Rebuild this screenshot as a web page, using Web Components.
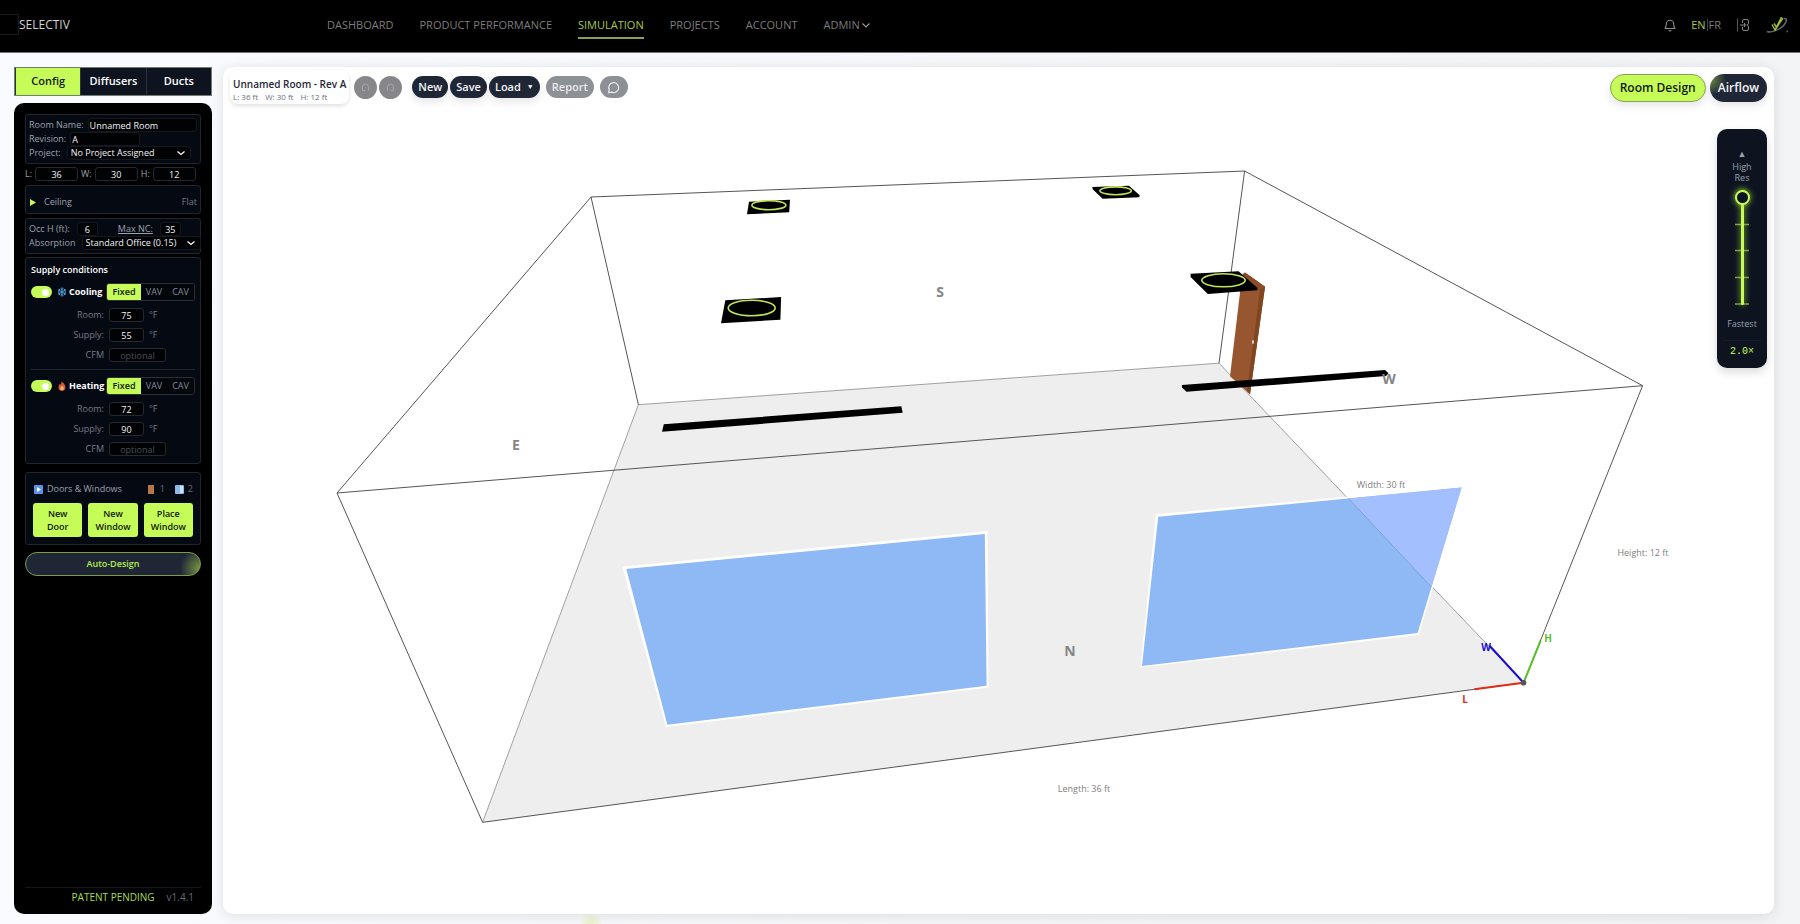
<!DOCTYPE html>
<html lang="en">
<head>
<meta charset="utf-8">
<title>Selectiv – Simulation</title>
<style>
html,body{margin:0;height:100%}
body{font-family:"Open Sans","Noto Sans",sans-serif;--lime:#c6fc57;--ink:#0d1420;--slate:#1f2737;--muted:#9ca2ac;--line:#20252e}
</style>
</head>
<body>
<selectiv-app></selectiv-app>
<script>
const BASE = `*,*::before,*::after{box-sizing:border-box}button,input,select{font:inherit;color:inherit;margin:0}button{cursor:pointer}svg{display:block}a{color:inherit;text-decoration:none}`;
const define = (name, css, html) => customElements.define(name, class extends HTMLElement {
  constructor() {
    super();
    this.attachShadow({mode: "open"});
  }
  connectedCallback() {
    const t = document.createElement("template");
    t.innerHTML = `<style>${BASE}${css}</style>${typeof html === "function" ? html(this) : html}`;
    this.shadowRoot.replaceChildren(t.content.cloneNode(true));
  }
});
const attr = (el, n, d = "") => el.getAttribute(n) ?? d;

define("nav-link", `
:host{display:block}
a{display:flex;align-items:center;gap:2px;height:26px;font-size:11px;line-height:16px;color:#7d7d7d;border-bottom:2px solid transparent;white-space:nowrap}
:host([current]) a{color:#a9c64c;border-color:#8aa05a}
svg{width:8px;height:8px}`,
el => `<a href="#"${el.hasAttribute("current") ? ' aria-current="page"' : ""}><slot></slot>${el.hasAttribute("menu") ? '<svg viewBox="0 0 8 8"><path d="M.5 2.5 4 6l3.500-3.500" fill="none" stroke="#999" stroke-width="1.200"/></svg>' : ""}</a>`);

define("app-header", `
:host{display:flex;align-items:center;height:53px;background:#000;border-bottom:1px solid #77707a;color:#7d7d7d;padding:0 12px 3px 0}
.brand{display:flex;align-items:center;width:327px;color:#d0d0d0;font-size:12px;line-height:16px}
.mark{width:19px;height:21px;border:1px solid #1b1b1b;border-left:0}
nav{display:flex;gap:26px;padding-top:2px}
.right{margin-left:auto;display:flex;align-items:center;font-size:11px;line-height:16px}
.lang{display:flex;gap:1px;margin:0 16px 0 15px}
.lang .on{color:#a9c64c}
.lang i{width:1px;height:12px;background:#444;align-self:center}
button{border:0;background:none;padding:0}
.logo{margin-left:16px}`,
`<a class="brand" href="#"><span class="mark"></span>SELECTIV</a>
<nav><nav-link>DASHBOARD</nav-link><nav-link>PRODUCT PERFORMANCE</nav-link><nav-link current>SIMULATION</nav-link><nav-link>PROJECTS</nav-link><nav-link>ACCOUNT</nav-link><nav-link menu>ADMIN</nav-link></nav>
<div class="right">
<button aria-label="Notifications"><svg width="12" height="14" viewBox="0 0 12 14" fill="none" stroke="#8b8b8b" stroke-width="1.100"><path d="M1 10.500C2.300 9 2.300 8 2.300 6a3.700 3.700 0 0 1 7.400 0c0 2 0 3 1.300 4.500z" stroke-linejoin="round"/><path d="M4.700 12.200a1.500 1.500 0 0 0 2.600 0"/></svg></button>
<span class="lang"><a class="on" href="#">EN</a><i></i><a href="#">FR</a></span>
<button aria-label="Sign out"><svg width="13" height="14" viewBox="0 0 13 14" fill="none" stroke="#858585"><path d="M.5.500v13" stroke="#555"/><path d="M5.500 5V3q0-1.500 1.500-1.500h3Q11.500 1.500 11.500 3v2q0 1.500-1.500 2 1.500.500 1.500 2v2q0 1.500-1.500 1.500H7q-1.500 0-1.500-1.500V9M3 7h6.500M7.500 5v4"/></svg></button>
<a class="logo" href="#" aria-label="Company"><svg width="22" height="18" viewBox="0 0 22 18" fill="none"><path d="M1 15.500c4 2 18-3 19.500-11.500q0-1.500-2.500-1.500" stroke="#666" stroke-width="1.500"/><path d="m6 8.500 3 5.500 6.500-13M8 7.500l2 3M9 14 17 2" stroke="#9fbd3f" stroke-width="1.400"/><path d="M20.500 15.500h1.500" stroke="#666" stroke-width="1.500"/></svg></a>
</div>`);

define("side-tabs", `
:host{display:grid;grid-template-columns:repeat(3,1fr);height:29px;border:1px solid #747c70;background:var(--ink)}
button{border:0;border-left:1px solid #2a3240;background:none;color:#fff;font-size:11px;line-height:16px;font-weight:600;padding:0 0 1px}
button:first-child{border:0}
button[aria-selected=true]{background:var(--lime);color:#10180a}`,
`<button role="tab" aria-selected="true">Config</button><button role="tab" aria-selected="false">Diffusers</button><button role="tab" aria-selected="false">Ducts</button>`);

define("panel-card", `
:host{display:flex;flex-direction:column;background:#050912;border:1px solid var(--line);border-radius:3px;padding:3px}`, `<slot></slot>`);

/* label + input in one row; width and alignment come from attributes */
define("text-field", `
:host{display:flex;align-items:center;gap:var(--gap,4px);height:14px;font-size:9px;line-height:12px;color:var(--muted);white-space:nowrap}
input{width:var(--w,100%);min-width:0;height:100%;border:1px solid #15191f;border-radius:3px;background:#010204;color:#f2f3f5;padding:0 1px;outline:0}
:host([center]) input{text-align:center;padding:0}
:host([tall]) input{border-color:#24282f}
:host([under]) label{text-decoration:underline}
:host([form]) label{width:73px;text-align:right;color:#767c86}
:host([form]){gap:5px}
:host([form]:not([center])) input{padding:0 10px}
input::placeholder{color:#4b5059;opacity:1}
span{color:#767c86}`,
el => `<label for="f">${attr(el, "label")}</label><input id="f" value="${attr(el, "value")}" placeholder="${attr(el, "placeholder")}">${el.hasAttribute("unit") ? `<span>${attr(el, "unit")}</span>` : ""}`);

define("select-field", `
:host{display:flex;align-items:center;gap:6px;height:14px;font-size:9px;line-height:12px;color:var(--muted);white-space:nowrap}
.box{display:grid;grid-template-columns:1fr 14px;align-items:center;width:var(--w);flex:none}
select{grid-area:1/1/2/3;appearance:none;height:14px;border:1px solid #15191f;border-radius:3px;background:#010204;color:#f2f3f5;padding:0 3px;width:100%;outline:0}
svg{grid-area:1/2;width:8px;height:8px;pointer-events:none}`,
el => `<label for="s">${attr(el, "label")}</label><span class="box"><select id="s"><option>${attr(el, "value")}</option></select><svg viewBox="0 0 8 8"><path d="m.500 2.500 3.500 3 3.500-3" fill="none" stroke="#fff" stroke-width="1.300"/></svg></span>`);

const SNOW = `<svg width="10" height="10" viewBox="0 0 10 10" fill="none" stroke="#4da3dd" stroke-width="1"><path d="M5 .500v9M1 2.700l8 4.600M1 7.300l8-4.600M3.500 1.300 5 2.700l1.500-1.400M3.500 8.700 5 7.300l1.500 1.400M1 4.300l1.800-.500L2.400 2M9 5.700l-1.800.500L7.600 8M1 5.700l1.800.500L2.400 8M9 4.300l-1.800-.500L7.600 2"/></svg>`;
const FIRE = `<svg width="10" height="10" viewBox="0 0 10 10"><path d="M4.500.300C6 2 8.500 3.500 8.500 6.500A3.500 3.500 0 0 1 5 9.800 3.500 3.500 0 0 1 1.500 6.500C1.500 4.500 2.500 4 2.700 2.800l.8.900Q4.800 2.500 4.500.300z" fill="#d9583a"/><path d="M5 4.500c1 1 1.800 1.600 1.800 3A1.800 2 0 0 1 5 9.500a1.800 2 0 0 1-1.800-2C3.200 6.300 4.500 6 5 4.500z" fill="#f6b36a"/></svg>`;

define("supply-mode", `
:host{display:flex;flex-direction:column;gap:6px}
.head{display:flex;align-items:center;height:18px;margin-bottom:1px;font-size:9px;line-height:12px}
.toggle{appearance:none;width:21px;height:12px;border-radius:6px;background:var(--lime);margin:0 5px 0 0;display:flex;align-items:center;justify-content:flex-end;padding:0 3px;flex:none}
.toggle::before{content:"";width:7px;height:7px;border-radius:50%;background:#fff}
label{color:#fff;font-weight:700;margin-left:2px;flex:1}
.seg{display:grid;grid-template-columns:34px 26px 27px;width:89px;height:18px;border:1px solid #2a2f38;border-radius:3px;overflow:hidden;flex:none}
.seg button{border:0;background:#03060b;color:#858b95;padding:0}
.seg .on{background:var(--lime);color:#10180a;font-weight:600}`,
el => `<div class="head"><input class="toggle" id="t" type="checkbox" role="switch" checked>${attr(el, "icon") === "snow" ? SNOW : FIRE}<label for="t">${attr(el, "label")}</label>
<div class="seg"><button class="on">Fixed</button><button>VAV</button><button>CAV</button></div></div>
<text-field form tall center label="Room:" value="${attr(el, "room")}" unit="°F" style="--w:35px"></text-field>
<text-field form tall center label="Supply:" value="${attr(el, "supply")}" unit="°F" style="--w:35px"></text-field>
<text-field form tall center label="CFM" placeholder="optional" style="--w:57px"></text-field>`);

define("config-panel", `
:host{display:flex;flex-direction:column;background:#000;border-radius:10px;padding:11px 11px 8px;font-size:9px;line-height:12px;color:var(--muted)}
.dims{display:flex;gap:3px;margin:3px 0 4px}
.occ{display:flex;gap:20px}
.ceiling{display:flex;align-items:center;gap:8px;height:21px;padding:5px 0 0 1px;border:0;background:none;text-align:left}
.ceiling b{flex:1;font-weight:400}
.ceiling span{color:#767c86}
.c2{margin:4px 0 3px}
.supply{padding:5px 5px 7px}
h2{margin:0 0 6px;font-size:9px;line-height:14px;color:#fff;font-weight:600}
hr{width:100%;margin:7px 0;border:0;border-top:1px solid var(--line)}
.dw{margin:8px 0 7px;padding:6px 7px 7px}
.dwh{display:flex;align-items:center;gap:4px;height:20px;padding-left:1px}
.dwh b{flex:1;font-weight:400}
.dwh span{color:#686e79;margin:0 6px 0 2px}
.dwh span:last-child{margin:0}
.btns{display:grid;grid-template-columns:repeat(3,1fr);gap:6px;margin-top:4px}
.btns button{height:34px;border:0;border-radius:3px;background:var(--lime);color:#10180a;font-weight:600;line-height:13px;padding:0 4px}
.auto{height:24px;border:1px solid #7d9a49;border-radius:12px;background:radial-gradient(circle at 100% 70%,#7a9546 0,#1f2737 20px);color:#b4ec4c;font-weight:600;padding:0}
footer{display:flex;justify-content:flex-end;gap:12px;margin-top:auto;border-top:1px solid #12161d;padding:0 7px 0 0;font-size:10px;line-height:18px;color:#686e79}
footer b{font-weight:400;color:#a9dc48}`,
`<panel-card>
<text-field label="Room Name:" value="Unnamed Room"></text-field>
<text-field label="Revision:" value="A" style="--w:70px"></text-field>
<select-field label="Project:" value="No Project Assigned" style="--w:124px"></select-field>
</panel-card>
<div class="dims">
<text-field tall center label="L:" value="36" style="--w:43px;--gap:3px"></text-field>
<text-field tall center label="W:" value="30" style="--w:43px;--gap:3px"></text-field>
<text-field tall center label="H:" value="12" style="--w:43px;--gap:3px"></text-field>
</div>
<panel-card><button class="ceiling" aria-expanded="false"><svg width="6" height="7" viewBox="0 0 6 7"><path d="M0 0v7l6-3.500z" fill="#c6fc57"/></svg><b>Ceiling</b><span>Flat</span></button></panel-card>
<panel-card class="c2">
<div class="occ"><text-field center label="Occ H (ft):" value="6" style="--w:21px;--gap:7px"></text-field><text-field center under label="Max NC:" value="35" style="--w:21px;--gap:7px"></text-field></div>
<select-field label="Absorption" value="Standard Office (0.15)" style="--w:119px"></select-field>
</panel-card>
<panel-card class="supply"><h2>Supply conditions</h2>
<supply-mode icon="snow" label="Cooling" room="75" supply="55"></supply-mode><hr>
<supply-mode icon="fire" label="Heating" room="72" supply="90"></supply-mode></panel-card>
<panel-card class="dw"><div class="dwh"><svg width="9" height="9" viewBox="0 0 9 9"><rect width="9" height="9" rx="1" fill="#5b93e6"/><path d="M3 2v5l4-2.500z" fill="#fff"/></svg><b>Doors &amp; Windows</b>
<svg width="6" height="9" viewBox="0 0 6 9"><rect width="6" height="9" fill="#b87548"/></svg><span>1</span>
<svg width="9" height="9" viewBox="0 0 9 9"><rect width="9" height="9" rx="1" fill="#8fbbe8"/><path d="M5 1h3v7H5z" fill="#c7e0f7"/></svg><span>2</span></div>
<div class="btns"><button>New Door</button><button>New Window</button><button>Place Window</button></div></panel-card>
<button class="auto">Auto-Design</button>
<footer><b>PATENT PENDING</b><span>v1.4.1</span></footer>`);

define("pill-button", `
:host{display:block}
button{display:flex;align-items:center;justify-content:center;gap:6px;height:22px;min-width:28px;padding:0 6px;border:0;border-radius:11px;background:var(--slate);color:#f3f4f6;font-size:11px;line-height:16px;font-weight:600;white-space:nowrap;box-shadow:0 4px 8px #0000001a}
button:disabled{background:#8d9095;color:#e9eaf0;box-shadow:none}
:host([round]) button{width:23px;min-width:23px;height:23px;padding:0;border-radius:12px;background:#87878b;color:#a5a5aa}
:host([large]) button{height:28px;border-radius:14px;padding:0 8px;font-size:12px;line-height:18px;background:radial-gradient(circle at 0 20%,#6f8744 0,var(--slate) 16px)}
:host([large][active]) button{background:var(--lime);color:#10180a;border:1px solid #8aa05a;padding:0 9px}`,
el => `<button${el.hasAttribute("off") ? " disabled" : ""} aria-label="${attr(el, "name") || el.textContent.trim()}"><slot></slot></button>`);

define("room-info", `
:host{display:block;padding:6px 3px 2px;border-radius:8px;background:#fff;box-shadow:0 2px 4px #0000001f;white-space:nowrap}
h1{margin:0;font-size:10px;line-height:16px;font-weight:600;color:#1f2737}
p{margin:0;display:flex;gap:7px;font-size:8px;line-height:10px;color:#6b7280}`,
`<h1>Unnamed Room - Rev A</h1><p><span>L: 36 ft</span><span>W: 30 ft</span><span>H: 12 ft</span></p>`);

define("resolution-slider", `
:host{display:flex;flex-direction:column;align-items:center;width:50px;height:239px;padding:20px 6px 0;border-radius:10px;background:var(--ink);color:#9aa1ad;font-size:9px;line-height:11px;text-align:center;box-shadow:0 4px 10px #00000026}
.up{font-size:9px;line-height:10px}
label{padding:2px 2px 7px;width:30px}
.track{display:grid;place-items:center;height:115px;margin-bottom:13px}
.track>*{grid-area:1/1}
input{appearance:none;writing-mode:vertical-lr;direction:rtl;width:16px;height:115px;background:none}
input::-webkit-slider-runnable-track{width:3px;height:115px;background:var(--lime);box-shadow:0 0 6px #a0d838;border-radius:2px}
input::-webkit-slider-thumb{appearance:none;width:15px;height:15px;margin-left:-6px;margin-right:-6px;border-radius:50%;background:var(--ink);border:2px solid var(--lime);box-shadow:0 0 6px #a0d838}
output{font-family:"Liberation Mono","DejaVu Sans Mono",monospace;font-size:10px;line-height:14px;color:var(--lime);border-top:1px solid #151d2a;width:100%;margin-top:11px;padding-top:4px}`,
`<span class="up">▲</span><label for="r">High Res</label>
<div class="track"><svg width="14" height="115" viewBox="0 0 14 115"><path d="M0 34.500h14M0 60.500h14M0 87.500h14M0 114h14" stroke="#7d9c45" stroke-width="1.500"/></svg><input id="r" type="range" min="0" max="4" value="4"></div>
<span>Fastest</span><output for="r">2.0×</output>`);

define("room-scene", `
:host{display:block;min-height:0}
svg{width:100%;height:100%}
.edge{fill:none;stroke:#555;stroke-width:1}
.thin{fill:none;stroke:#8a8a8a;stroke-width:.8}
.ring{fill:none;stroke:#bfe558;stroke-width:1.600}
.dim{font-size:9px;fill:#808080;text-anchor:middle}
.wall{font-size:14px;font-weight:700;fill:#858585;text-anchor:middle}
.axis{font-size:10px;font-weight:700;text-anchor:middle}`,
`<svg viewBox="223 67 1551 847" role="img" aria-label="Room model">
<path d="M638.400 404.700 1219 363.200 1523.600 682.700 482.600 822.300z" fill="#eee"/>
<path class="thin" d="M482.600 822.300 638.400 404.700 1219 363.200 1523.600 682.700"/>
<path class="edge" d="M591 197 1244.600 171 1642.600 385.700 337 493zM591 197l47.400 207.700M1244.600 171 1219 363.200M1642.600 385.700l-119 297L482.600 822.300 337 493"/>
<path d="M1242 276l3-3.300 20 14-15 107.600-20-18z" fill="#985630"/><path d="M1265 286.700 1250 394.300l-3-3.300 13-100.500-16-15 1-2.800z" fill="#7f461f"/><path d="m1265 286.700-5 3.800-18-16 3-2z" fill="#8c4d26"/>
<ellipse cx="1253" cy="342" rx="1" ry="2" fill="#d9d9d9"/>
<path d="M749 201.700 790 199.700 789.200 212.300 747 214.300zM1092.300 187 1129 185.700 1139.700 195.300 1139.300 197.300 1102.600 198.700 1092.700 189.300zM725.300 300.300 781.100 297 780.400 319.700 721 323.300zM1190.600 273.700 1238.500 271.300 1257.600 288 1257.200 290.300 1207.800 294 1190.600 277z"/>
<g class="ring"><ellipse cx="768.900" cy="205.200" rx="17" ry="4.500"/><ellipse cx="1115.600" cy="190.800" rx="15.700" ry="3.900"/><ellipse cx="751.700" cy="308" rx="23.500" ry="7.700"/><ellipse cx="1223.500" cy="280.300" rx="21.700" ry="6.500"/></g>
<path d="M663.800 424.300 901.300 406.300 902.700 412.700 662 431.700zM1181.900 385 1385 370 1388.500 373.300 1386 376 1186.500 391.700 1182 387.500z"/>
<path d="M622.300 566.700 987.500 531 988.500 687.500 666 727zM1155.900 514.300 1463 486 1418.800 635 1140.500 667.500z" fill="#fff"/>
<path d="M626.300 569 984.800 534 986.600 685.700 667.400 724.700zM1158.200 516.700 1461.600 487.500 1417.600 633 1142 666z" fill="#8eb9f4"/>
<path d="M1348.400 498.400 1461.600 487.500 1431.400 587z" fill="#a3bffd"/>
<path d="M1348.400 498.400 1431.400 587" stroke="#7a9dd0" stroke-width=".8"/>
<g fill="none" stroke-width="2"><path d="m1523.600 682.700-34-37" stroke="#1a0fd0"/><path d="m1523.600 682.700 17-42" stroke="#58bf25"/><path d="m1523.600 682.700-49.300 6.600" stroke="#e02c18"/></g><circle cx="1523.600" cy="682.700" r="2.800" fill="#555"/>
<g class="wall"><text x="940" y="297">S</text><text x="516" y="450">E</text><text x="1389" y="384">W</text><text x="1070" y="656">N</text></g>
<g class="dim"><text x="1381" y="488">Width: 30 ft</text><text x="1643" y="556">Height: 12 ft</text><text x="1084" y="792">Length: 36 ft</text></g>
<g class="axis"><text x="1486" y="651" fill="#1a0fd0">W</text><text x="1548" y="642" fill="#58bf25">H</text><text x="1465" y="703" fill="#e02c18">L</text></g>
</svg>`);

define("design-canvas", `
:host{display:grid;grid-template:minmax(0,1fr)/minmax(0,1fr);background:#fff;border-radius:10px;box-shadow:0 2px 14px #0000001c;overflow:hidden}
room-scene,.over{grid-area:1/1}
.over{display:flex;align-items:flex-start;justify-content:space-between;padding:3px 7px 0 7px;z-index:1}
.bar{display:flex;align-items:center;gap:2px}
.undo{display:flex;gap:2px;margin:0 8px 0 3px}
.rep,.chat{margin-left:4px}
.side{display:flex;flex-direction:column;align-items:flex-end;gap:27px;padding-top:4px}
.modes{display:flex;gap:4px}
small{font-size:7px;line-height:10px}`,
`<room-scene></room-scene><div class="over">
<div class="bar"><room-info></room-info>
<div class="undo"><pill-button round off name="Undo"><svg width="9" height="9" viewBox="0 0 9 9" fill="none" stroke="currentColor"><path d="M1.500 3v4.500H4M1.500 7V4a3 3 0 0 1 6 0v3.500"/></svg></pill-button><pill-button round off name="Redo"><svg width="9" height="9" viewBox="0 0 9 9" fill="none" stroke="currentColor"><path d="M7.500 3v4.500H5M7.500 7V4a3 3 0 0 0-6 0v3.500"/></svg></pill-button></div>
<pill-button>New</pill-button><pill-button>Save</pill-button><pill-button>Load <small>▼</small></pill-button>
<pill-button class="rep" off>Report</pill-button><pill-button class="chat" off name="Comments"><svg width="13" height="13" viewBox="0 0 13 13" fill="none" stroke="currentColor" stroke-width="1.200"><path d="M1.500 11.800 2.200 8.800A5 5 0 1 1 4.500 11.100z"/></svg></pill-button></div>
<div class="side"><div class="modes"><pill-button large active>Room Design</pill-button><pill-button large>Airflow</pill-button></div><resolution-slider></resolution-slider></div></div>`);

define("selectiv-app", `
:host{display:grid;grid-template-rows:auto minmax(0,1fr);height:100vh;min-height:640px;overflow:hidden;background:radial-gradient(circle at 591px 100%,#e9f4c4 0,#e9f4c400 12px),linear-gradient(90deg,#fafbfe,#f3f4f6)}
main{display:grid;grid-template-columns:198px minmax(0,1fr);gap:11px;padding:14px 26px 10px 14px;min-height:0}
aside{display:flex;flex-direction:column;gap:7px;min-height:0}
config-panel{flex:1}`,
`<app-header></app-header><main><aside><side-tabs role="tablist"></side-tabs><config-panel></config-panel></aside><design-canvas></design-canvas></main>`);
</script>
</body>
</html>
